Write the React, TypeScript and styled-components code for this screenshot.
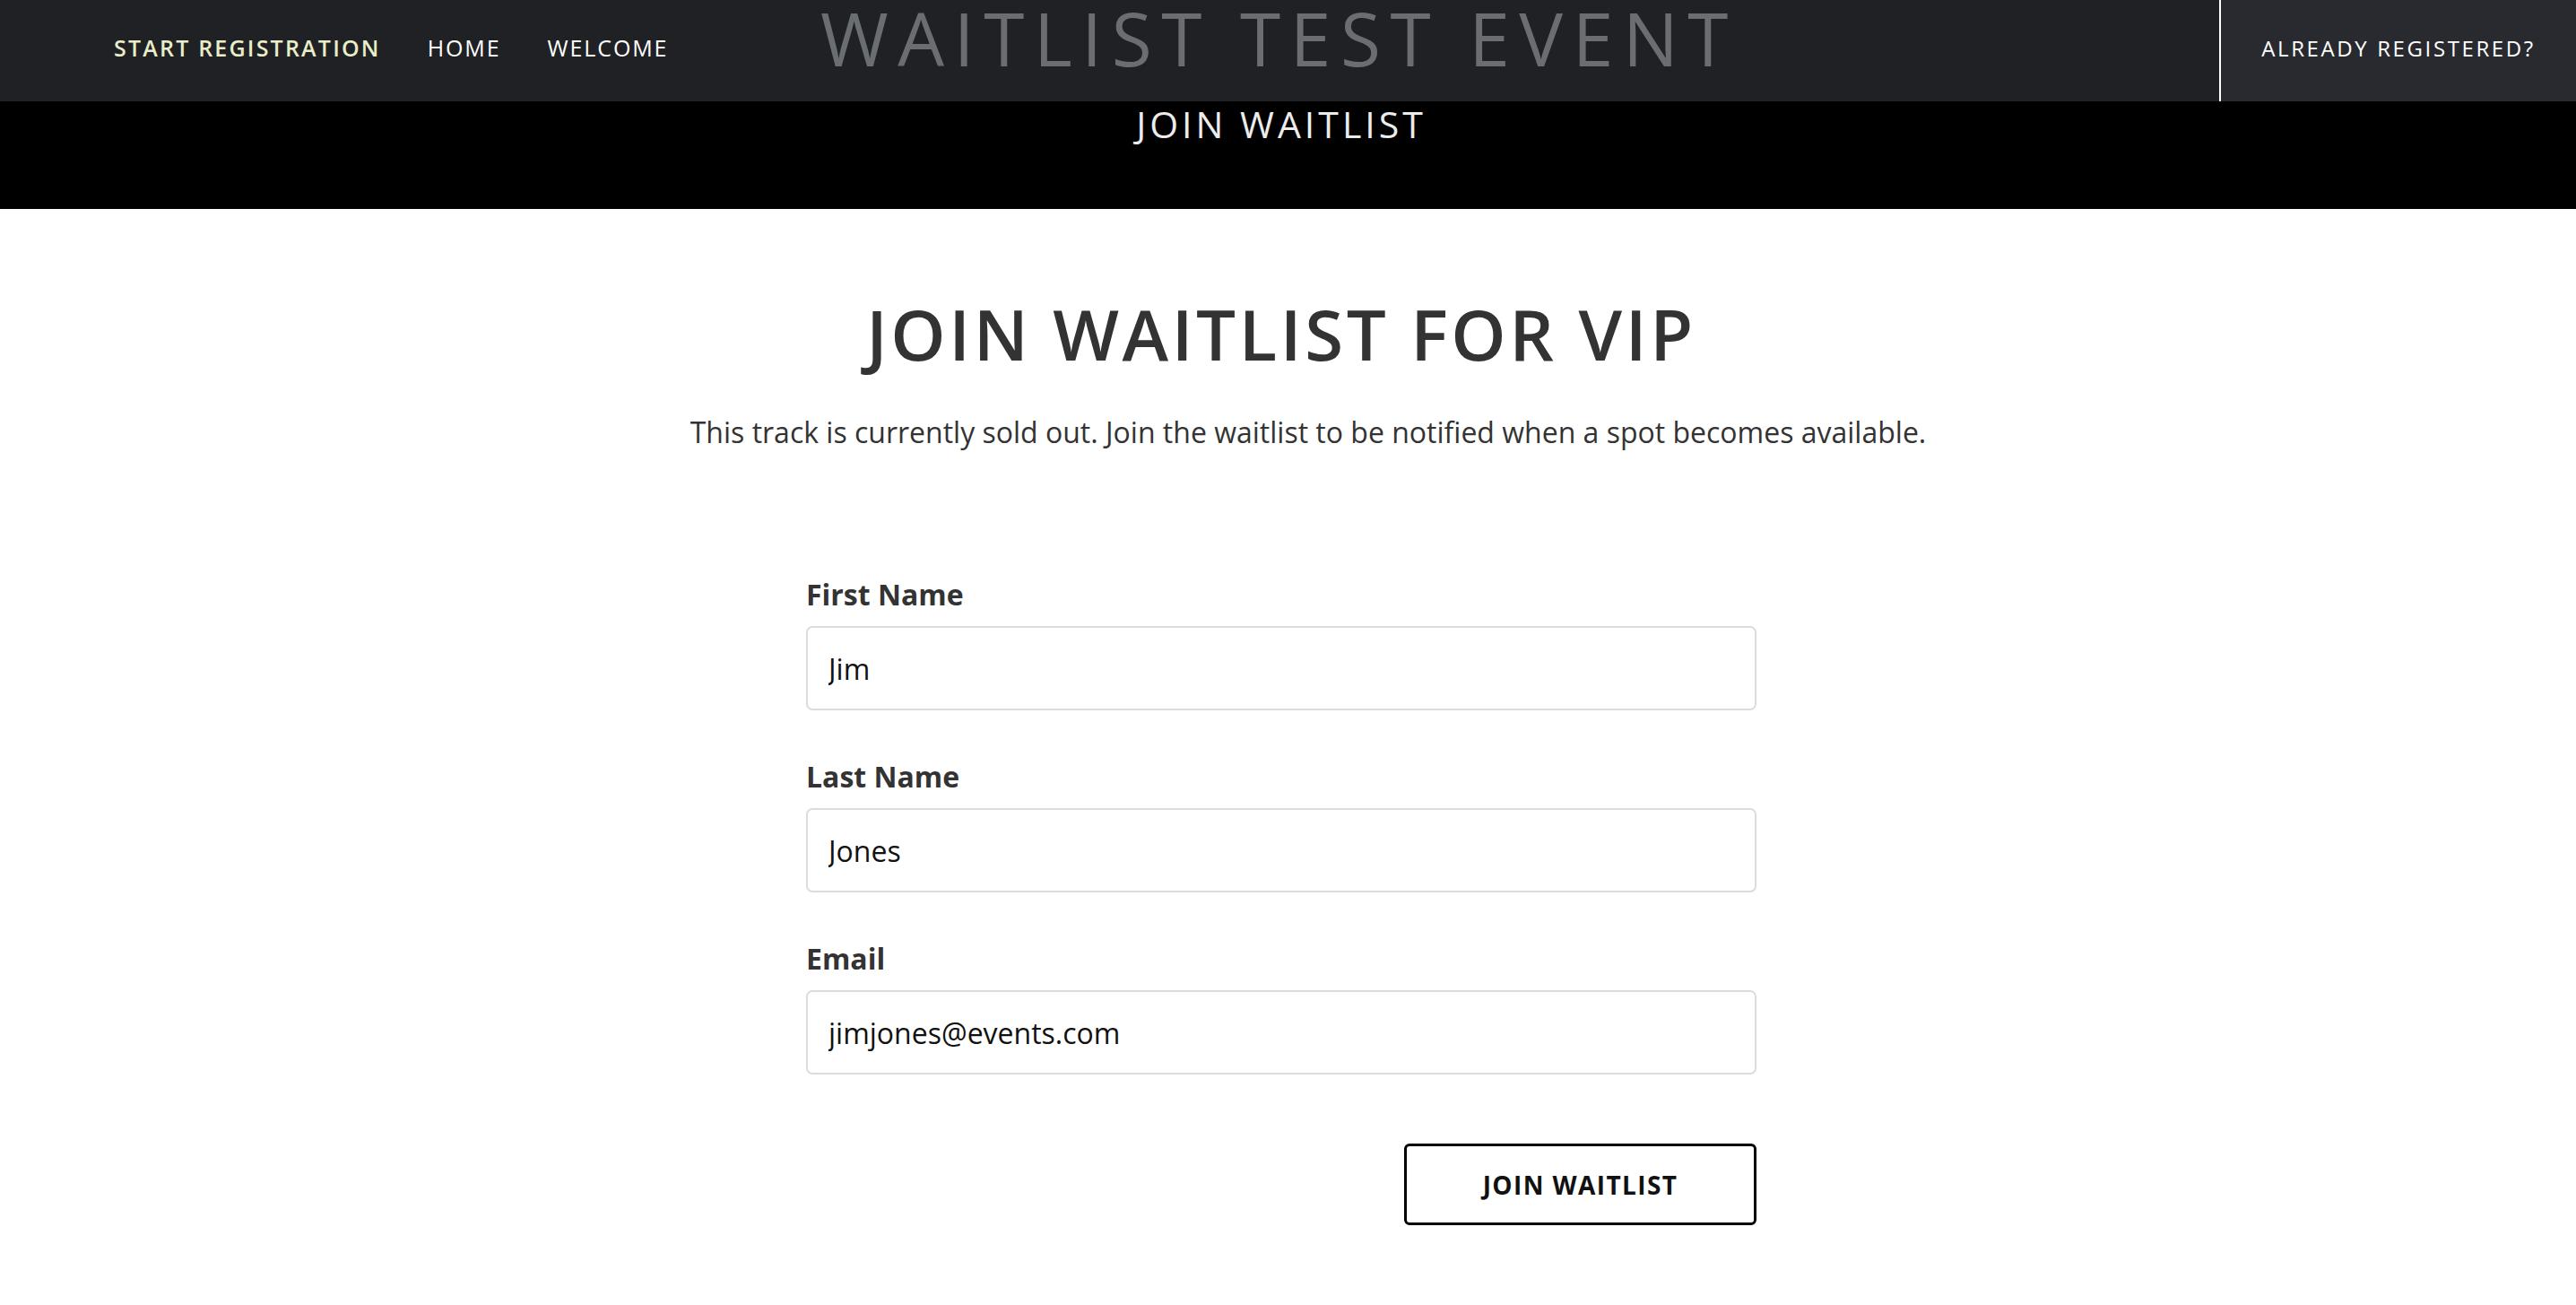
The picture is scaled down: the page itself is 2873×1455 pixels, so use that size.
import React from "react";
import styled, { createGlobalStyle } from "styled-components";

const GlobalStyle = createGlobalStyle`
  html, body {
    margin: 0;
    padding: 0;
    background: #ffffff;
    font-family: "Open Sans", "Noto Sans", Arial, sans-serif;
  }
  * { box-sizing: border-box; }
`;

const Page = styled.div`
  min-height: 1455px;
  background: #ffffff;
`;

const Header = styled.header`
  display: grid;
  grid-template-columns: 1fr auto 1fr;
  height: 113px;
  background: #1f2124;
`;

const Nav = styled.nav`
  display: flex;
  align-items: center;
  gap: 52px;
  padding: 0 0 7px 127px;
`;

const NavLink = styled.a<{ $active?: boolean }>`
  font-size: 25px;
  letter-spacing: ${(p) => (p.$active ? "2.2px" : "1.9px")};
  font-weight: ${(p) => (p.$active ? 600 : 500)};
  color: ${(p) => (p.$active ? "#e9edc8" : "#ffffff")};
  text-decoration: none;
  white-space: nowrap;
  cursor: pointer;
`;

const EventTitle = styled.div`
  align-self: start;
  padding: 2px 20px 0 0;
  font-size: 82px;
  line-height: 81px;
  font-weight: 400;
  letter-spacing: 10.6px;
  color: #6a6e71;
  white-space: nowrap;
`;

const HeaderRight = styled.div`
  display: flex;
  justify-content: flex-end;
`;

const LoginButton = styled.a`
  display: flex;
  align-items: center;
  justify-content: center;
  width: 398px;
  height: 100%;
  padding-bottom: 7px;
  background: #282a2f;
  border-left: 2px solid #ffffff;
  font-size: 24px;
  font-weight: 500;
  letter-spacing: 2.6px;
  color: #ffffff;
  white-space: nowrap;
  cursor: pointer;
`;

const Banner = styled.div`
  height: 120px;
  padding: 1px 15px 0 0;
  background: #000000;
  display: flex;
  justify-content: center;
`;

const BannerTitle = styled.h2`
  margin: 0;
  font-size: 41px;
  line-height: 48px;
  font-weight: 400;
  letter-spacing: 4px;
  color: #ececec;
`;

const Main = styled.main`
  display: flex;
  flex-direction: column;
  align-items: center;
  padding: 93px 15px 80px 0;
`;

const Heading = styled.h1`
  margin: 0;
  font-size: 78px;
  line-height: 92px;
  font-weight: 600;
  letter-spacing: 3.6px;
  color: #333333;
`;

const Lead = styled.p`
  margin: 42px 0 0;
  padding-left: 60px;
  font-size: 32px;
  line-height: 44px;
  color: #333333;
`;

const Form = styled.form`
  width: 1060px;
  margin-top: 137px;
  display: flex;
  flex-direction: column;
  gap: 52px;
`;

const Field = styled.div`
  display: flex;
  flex-direction: column;
  gap: 14px;
`;

const Label = styled.label`
  font-size: 32px;
  line-height: 43px;
  font-weight: 700;
  color: #333333;
`;

const Input = styled.input`
  height: 94px;
  width: 100%;
  padding: 0 23px;
  border: 2px solid #dcdcdc;
  border-radius: 7px;
  font-family: "Open Sans", "Noto Sans", Arial, sans-serif;
  font-size: 32px;
  color: #111111;
  background: #ffffff;
  outline: none;
`;

const Actions = styled.div`
  display: flex;
  justify-content: flex-end;
  margin-top: 25px;
`;

const SubmitButton = styled.button`
  width: 393px;
  height: 91px;
  border: 3.5px solid #000000;
  border-radius: 6px;
  background: #ffffff;
  font-family: "Open Sans", "Noto Sans", Arial, sans-serif;
  font-size: 28px;
  font-weight: 700;
  letter-spacing: 1.4px;
  color: #111111;
  cursor: pointer;
`;

const fields = [
  { id: "first", label: "First Name", value: "Jim", type: "text" },
  { id: "last", label: "Last Name", value: "Jones", type: "text" },
  { id: "email", label: "Email", value: "jimjones@events.com", type: "email" },
];

export default function App() {
  return (
    <Page>
      <GlobalStyle />
      <Header>
        <Nav>
          <NavLink $active>START REGISTRATION</NavLink>
          <NavLink>HOME</NavLink>
          <NavLink>WELCOME</NavLink>
        </Nav>
        <EventTitle>WAITLIST TEST EVENT</EventTitle>
        <HeaderRight>
          <LoginButton>ALREADY REGISTERED?</LoginButton>
        </HeaderRight>
      </Header>
      <Banner>
        <BannerTitle>JOIN WAITLIST</BannerTitle>
      </Banner>
      <Main>
        <Heading>JOIN WAITLIST FOR VIP</Heading>
        <Lead>
          This track is currently sold out. Join the waitlist to be notified when a spot becomes available.
        </Lead>
        <Form onSubmit={(e) => e.preventDefault()}>
          {fields.map((f) => (
            <Field key={f.id}>
              <Label htmlFor={f.id}>{f.label}</Label>
              <Input id={f.id} type={f.type} defaultValue={f.value} />
            </Field>
          ))}
          <Actions>
            <SubmitButton type="submit">JOIN WAITLIST</SubmitButton>
          </Actions>
        </Form>
      </Main>
    </Page>
  );
}
